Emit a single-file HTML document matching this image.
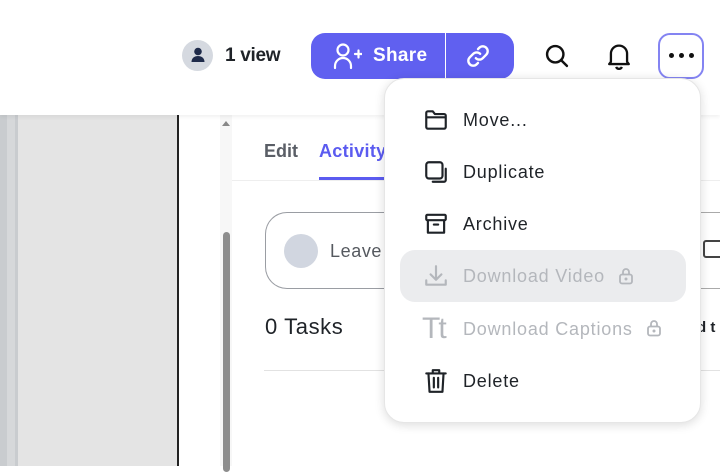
<!DOCTYPE html>
<html><head><style>
*{box-sizing:border-box;margin:0;padding:0}
body{width:720px;height:466px;overflow:hidden;position:relative;background:#fff;font-family:"Liberation Sans",sans-serif;}
.abs{position:absolute}
.mi{position:absolute;left:463px;font-size:18px;color:#1f2328;letter-spacing:.8px}
.dis{color:#b4b7bc}
svg{position:absolute}
</style></head><body>
<div class="abs" style="left:0;top:115px;width:18px;height:351px;background:#c9cccf"></div>
<div class="abs" style="left:7px;top:115px;width:8px;height:351px;background:#d6d8da"></div>
<div class="abs" style="left:18px;top:115px;width:159px;height:351px;background:#e4e4e4"></div>
<div class="abs" style="left:177px;top:115px;width:2px;height:351px;background:#222"></div>
<div class="abs" style="left:179px;top:115px;width:41px;height:351px;background:#fff"></div>
<div class="abs" style="left:220px;top:115px;width:12px;height:351px;background:#f7f7f7"></div>
<div class="abs" style="left:223px;top:232px;width:7px;height:240px;background:#8d8d8d;border-radius:4px"></div>
<div class="abs" style="left:222px;top:121px;width:0;height:0;border-left:4px solid transparent;border-right:4px solid transparent;border-bottom:5px solid #888"></div>
<div class="abs" style="left:0;top:0;width:720px;height:115px;background:#fff;box-shadow:0 2px 4px rgba(0,0,0,.06)"></div>
<div class="abs" style="left:182px;top:40px;width:31px;height:31px;border-radius:50%;background:#d5d9e0"></div>
<svg style="left:188px;top:45px" width="20" height="20" viewBox="0 0 20 20"><circle cx="10" cy="6.5" r="3.8" fill="#1e2a4a"/><path d="M3.5 17c0-4 3-6 6.5-6s6.5 2 6.5 6z" fill="#1e2a4a"/></svg>
<div class="abs" style="left:225px;top:45px;font-size:19px;font-weight:bold;color:#1f2328;letter-spacing:-.3px">1 view</div>
<div class="abs" style="left:311px;top:33px;width:203px;height:46px;border-radius:14px;background:#6060f0"></div>
<div class="abs" style="left:445px;top:33px;width:1px;height:46px;background:#fff"></div>
<svg style="left:332px;top:42px" width="30" height="28" viewBox="0 0 30 28" fill="none" stroke="#fff" stroke-width="2.2" stroke-linecap="round"><circle cx="11" cy="8" r="5.5"/><path d="M3 26v-2a8 8 0 0 1 16 0v2"/><path d="M23 12h7M26.5 8.5v7"/></svg>
<div class="abs" style="left:373px;top:45px;font-size:19px;font-weight:bold;color:#fff;letter-spacing:.3px">Share</div>
<svg style="left:465px;top:43px" width="26" height="26" viewBox="0 0 24 24" fill="none" stroke="#fff" stroke-width="2.2" stroke-linecap="round"><path d="M10 14a4.5 4.5 0 0 0 6.4 0l3.2-3.2a4.5 4.5 0 0 0-6.4-6.4l-1.2 1.2"/><path d="M14 10a4.5 4.5 0 0 0-6.4 0l-3.2 3.2a4.5 4.5 0 0 0 6.4 6.4l1.2-1.2"/></svg>
<svg style="left:543px;top:42px" width="28" height="28" viewBox="0 0 24 24" fill="none" stroke="#111" stroke-width="2.1" stroke-linecap="round"><circle cx="10.5" cy="10.5" r="7"/><path d="M15.5 15.5l5 5"/></svg>
<svg style="left:605px;top:41px" width="28" height="30" viewBox="0 0 24 26" fill="none" stroke="#111" stroke-width="2" stroke-linejoin="round"><path d="M5 18V11a7 7 0 0 1 14 0v7l1.5 2h-17z"/><path d="M9.5 22.5a2.7 2.7 0 0 0 5 0"/></svg>
<div class="abs" style="left:658px;top:33px;width:46px;height:46px;border-radius:12px;border:2px solid #8484f2"></div>
<div class="abs" style="left:669px;top:53px;width:5px;height:5px;border-radius:50%;background:#111;box-shadow:10px 0 #111,20px 0 #111"></div>
<div class="abs" style="left:264px;top:141px;font-size:18px;font-weight:bold;color:#5a5e66">Edit</div>
<div class="abs" style="left:319px;top:141px;font-size:18px;font-weight:bold;color:#5b5bf0;letter-spacing:.3px">Activity</div>
<div class="abs" style="left:319px;top:177px;width:70px;height:3px;background:#5b5bf0"></div>
<div class="abs" style="left:232px;top:180px;width:488px;height:1px;background:#eee"></div>
<div class="abs" style="left:265px;top:212px;width:200px;height:77px;border:1.5px solid #9a9da3;border-radius:22px;border-right:none"></div>
<div class="abs" style="left:284px;top:234px;width:34px;height:34px;border-radius:50%;background:#d1d6e0"></div>
<div class="abs" style="left:330px;top:241px;font-size:18px;color:#55595f;letter-spacing:.6px">Leave</div>
<div class="abs" style="left:703px;top:240px;width:20px;height:18px;border:2px solid #444;border-radius:3px"></div>
<div class="abs" style="left:700px;top:212px;width:20px;height:1px;background:#aaa"></div>
<div class="abs" style="left:700px;top:288px;width:20px;height:1px;background:#aaa"></div>
<div class="abs" style="left:265px;top:314px;font-size:22px;color:#1f2328;letter-spacing:.6px">0 Tasks</div>
<div class="abs" style="left:697px;top:319px;font-size:15px;font-weight:bold;color:#1f2328">d t</div>
<div class="abs" style="left:264px;top:370px;width:456px;height:1px;background:#e2e2e2"></div>
<div class="abs" style="left:384px;top:78px;width:317px;height:345px;background:#fff;border-radius:20px;box-shadow:0 2px 10px rgba(0,0,0,.14);border:1px solid #e6e6e6"></div>
<div class="abs" style="left:400px;top:250px;width:286px;height:52px;background:#ebecee;border-radius:15px"></div>
<svg style="left:423px;top:107px" width="26" height="26" viewBox="0 0 24 24" fill="none" stroke="#1f2328" stroke-width="2" stroke-linejoin="round"><path d="M3 5.5a1.5 1.5 0 0 1 1.5-1.5h4.5l2 2.5h8.5a1.5 1.5 0 0 1 1.5 1.5v10.5a1.5 1.5 0 0 1-1.5 1.5h-15a1.5 1.5 0 0 1-1.5-1.5z"/><path d="M3 9.5h18"/></svg>
<div class="mi" style="top:110px">Move...</div>
<svg style="left:423px;top:159px" width="26" height="26" viewBox="0 0 24 24" fill="none" stroke="#1f2328" stroke-width="2" stroke-linecap="round"><rect x="3" y="3" width="15" height="15" rx="2.5"/><path d="M21 9v10.5a1.5 1.5 0 0 1-1.5 1.5H9"/></svg>
<div class="mi" style="top:162px">Duplicate</div>
<svg style="left:423px;top:211px" width="26" height="26" viewBox="0 0 24 24" fill="none" stroke="#1f2328" stroke-width="2" stroke-linejoin="round"><rect x="3" y="3.5" width="18" height="5" rx="1"/><path d="M4.5 8.5v11.5h15V8.5"/><path d="M10 12.5h4" stroke-linecap="round"/></svg>
<div class="mi" style="top:214px">Archive</div>
<svg style="left:423px;top:263px" width="26" height="26" viewBox="0 0 24 24" fill="none" stroke="#b4b7bc" stroke-width="2" stroke-linecap="round" stroke-linejoin="round"><path d="M12 3v12M7 10.5l5 5 5-5"/><path d="M3 16v4h18v-4"/></svg>
<div class="mi dis" style="top:266px">Download Video</div>
<svg style="left:618px;top:266px" width="16" height="20" viewBox="0 0 16 20" fill="none" stroke="#b4b7bc" stroke-width="1.8"><rect x="2" y="8.5" width="12" height="9" rx="2"/><path d="M5 8.5V6a3 3 0 0 1 6 0v2.5"/><circle cx="8" cy="13" r=".6" fill="#b4b7bc"/></svg>
<div class="abs dis" style="left:422px;top:312px;font-size:30px;letter-spacing:-2px;color:#b4b7bc">Tt</div>
<div class="mi dis" style="top:319px">Download Captions</div>
<svg style="left:646px;top:318px" width="16" height="20" viewBox="0 0 16 20" fill="none" stroke="#b4b7bc" stroke-width="1.8"><rect x="2" y="8.5" width="12" height="9" rx="2"/><path d="M5 8.5V6a3 3 0 0 1 6 0v2.5"/><circle cx="8" cy="13" r=".6" fill="#b4b7bc"/></svg>
<svg style="left:423px;top:367px" width="26" height="28" viewBox="0 0 24 26" fill="none" stroke="#1f2328" stroke-width="2" stroke-linecap="round" stroke-linejoin="round"><path d="M3 6h18M9 6V3h6v3"/><path d="M5 6l1 17h12l1-17"/><path d="M10 10v9M14 10v9"/></svg>
<div class="mi" style="top:371px">Delete</div>
</body></html>
